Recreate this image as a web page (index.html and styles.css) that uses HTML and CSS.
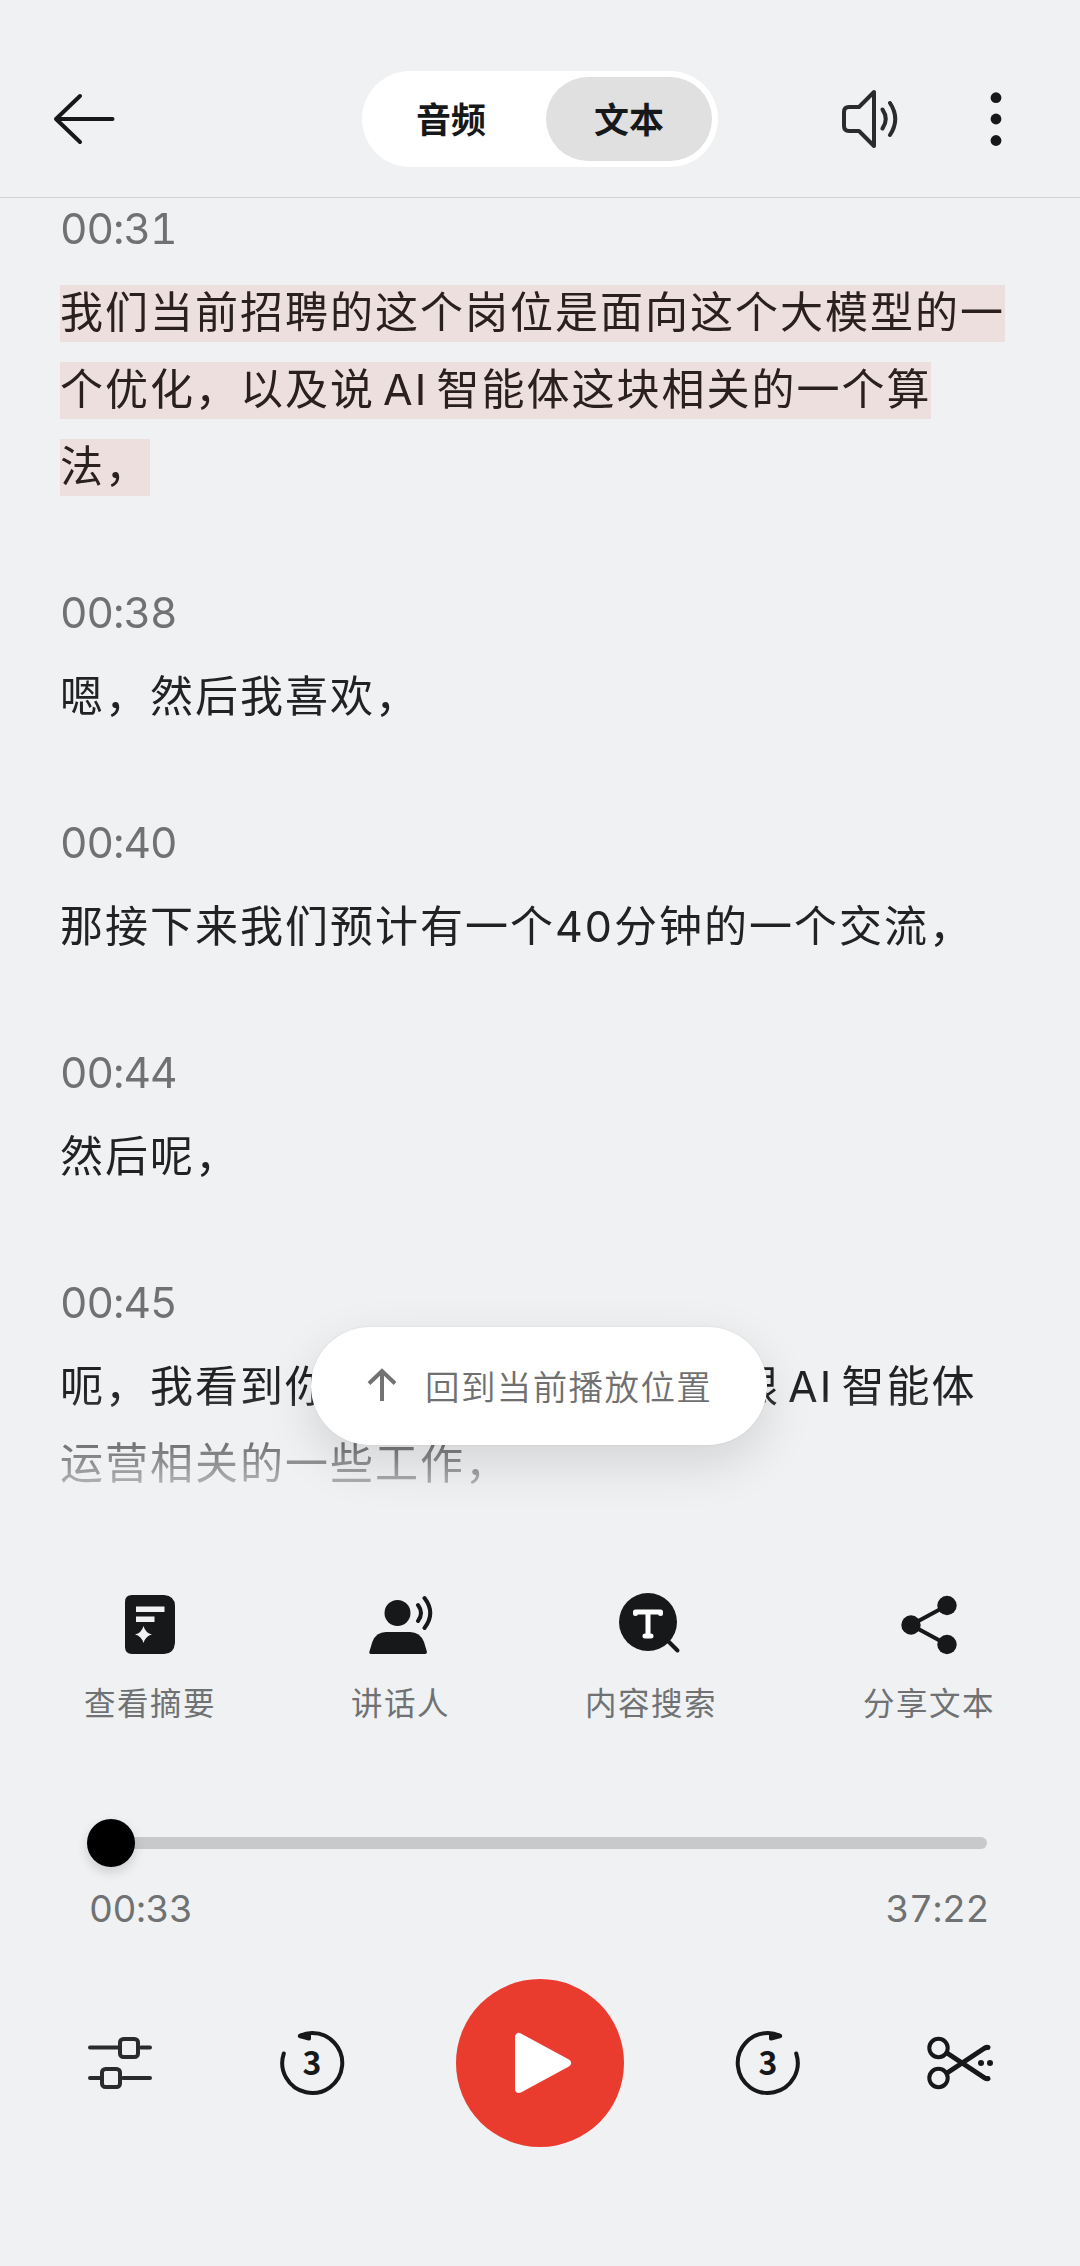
FILE: index.html
```html
<!DOCTYPE html>
<html lang="zh-CN">
<head>
  <meta charset="UTF-8">
  <meta name="viewport" content="width=device-width, initial-scale=1.0">
  <title>录音文本</title>
  <link rel="stylesheet" href="styles.css">
</head>
<body>
  <header class="topbar">
    <svg class="icon-back" width="62" height="52" viewBox="0 0 62 52">
      <path d="M59.5 26H3M27 3L3 26L27 49" />
    </svg>
    <div class="tabs">
      <div class="tab">音频</div>
      <div class="tab active">文本</div>
    </div>
    <div class="topbar-right">
      <svg class="icon-line" width="58" height="60" viewBox="0 0 58 60">
        <path d="M33 3V57L18 42H8Q3 42 3 37V23Q3 18 8 18H18Z" />
        <path d="M41.500 20.500Q48 30 41.500 39.500M49 14Q59.500 30 49 46" />
      </svg>
      <svg class="icon-more" width="12" height="54" viewBox="0 0 12 54">
        <circle cx="6" cy="5.700" r="5.400" />
        <circle cx="6" cy="27" r="5.400" />
        <circle cx="6" cy="48.500" r="5.400" />
      </svg>
    </div>
  </header>

  <main class="transcript">
    <div class="segment">
      <div class="time">00:31</div>
      <p><span class="highlight">我们当前招聘的这个岗位是面向这个大模型的一<br>个优化，以及说 AI 智能体这块相关的一个算<br>法，</span></p>
    </div>
    <div class="segment">
      <div class="time">00:38</div>
      <p>嗯，然后我喜欢，</p>
    </div>
    <div class="segment">
      <div class="time">00:40</div>
      <p>那接下来我们预计有一个40分钟的一个交流，</p>
    </div>
    <div class="segment">
      <div class="time">00:44</div>
      <p>然后呢，</p>
    </div>
    <div class="segment">
      <div class="time">00:45</div>
      <p>呃，我看到你之前也是有做过一些跟 AI 智能体<br>运营相关的一些工作，</p>
    </div>
  </main>

  <div class="back-to-current">
    <svg width="30" height="34" viewBox="0 0 30 34">
      <path d="M15 33V3M2 15.500L15 3L28 15.500" />
    </svg>
    <span>回到当前播放位置</span>
  </div>

  <div class="actions">
    <div class="action">
      <svg width="66" height="66" viewBox="0 0 66 66">
        <path d="M15 3H47Q58 4 58 14V51Q57 62 47 62H15Q8 62 8 55V10Q8 3 15 3Z" />
        <path class="cut" d="M19 14.500H47.500V20H19ZM19 24.500H37.500V30H19ZM26.500 34Q28.500 41 35 42.500Q28.500 44 26.500 51Q24.500 44 18 42.500Q24.500 41 26.500 34Z" />
      </svg>
      <span>查看摘要</span>
    </div>
    <div class="action">
      <svg width="66" height="66" viewBox="0 0 66 66">
        <circle cx="29.500" cy="21" r="13" />
        <path d="M18 40H42Q52 40 56 50L59 60Q59 62 57 62H3.500Q1 62 1.300 60L4.300 50Q8 40 18 40Z" />
        <path class="wave" d="M50 13Q56 21 50 29M56.500 6Q68 21 56.500 36" />
      </svg>
      <span>讲话人</span>
    </div>
    <div class="action">
      <svg width="66" height="66" viewBox="0 0 66 66">
        <circle cx="30" cy="30" r="29" />
        <path class="wave" d="M50 49L59.500 58.500" />
        <path class="serif" d="M17.500 21.500V20H42.500V21.500M30 20V44M27 44H33" />
      </svg>
      <span>内容搜索</span>
    </div>
    <div class="action">
      <svg width="66" height="66" viewBox="0 0 66 66">
        <circle cx="15" cy="33" r="9.700" />
        <circle cx="51" cy="13.500" r="9.700" />
        <circle cx="51" cy="52.500" r="9.700" />
        <path class="wave" d="M51 13.500L15 33L51 52.500" />
      </svg>
      <span>分享文本</span>
    </div>
  </div>

  <div class="progress">
    <div class="track">
      <div class="thumb"></div>
    </div>
    <div class="progress-times">
      <span>00:33</span>
      <span>37:22</span>
    </div>
  </div>

  <footer class="controls">
    <svg class="icon-line" width="66" height="66" viewBox="0 0 66 66">
      <path d="M3 17.500H31M54 17.500H63M3 48H13M36 48H63" />
      <rect x="33" y="9" width="18" height="18" rx="3.500" />
      <rect x="15" y="39" width="18" height="18" rx="3.500" />
    </svg>
    <svg class="icon-skip" width="66" height="66" viewBox="0 0 66 66">
      <path d="M4.800 23.500A30 30 0 1 0 33 3Q27 3 21.500 5.500" />
      <path class="tip" d="M32 2.500L20 4Q17.500 6 20 8L29.500 10.500Q32 11 32 8.500Z" />
      <text x="33" y="44.500">3</text>
    </svg>
    <div class="play">
      <svg width="58" height="62" viewBox="0 0 58 62">
        <path d="M5 5V57L53 31Z" />
      </svg>
    </div>
    <svg class="icon-skip" width="66" height="66" viewBox="0 0 66 66">
      <path d="M61.200 23.500A30 30 0 1 1 33 3Q39 3 44.500 5.500" />
      <path class="tip" d="M34 2.500L46 4Q48.500 6 46 8L36.500 10.500Q34 11 34 8.500Z" />
      <text x="33" y="44.500">3</text>
    </svg>
    <svg class="icon-cut" width="68" height="66" viewBox="0 0 68 66">
      <circle cx="11.500" cy="18" r="9.200" />
      <circle cx="11.500" cy="48" r="9.200" />
      <path class="blades" d="M20 23L57 47.500Q59 49 61 48.500M20 43L57 18.500Q59 17 61 17.500" />
      <circle class="dot" cx="54" cy="33" r="3" />
      <circle class="dot" cx="63" cy="33" r="3" />
    </svg>
  </footer>
</body>
</html>
```

FILE: styles.css
```css
* {
  box-sizing: border-box;
}

body {
  margin: 0;
  width: 1080px;
  height: 2266px;
  overflow: hidden;
  display: flex;
  flex-direction: column;
  position: relative;
  background: #eff1f3;
  color: #212224;
  font-family: Inter, "Noto Sans CJK SC", sans-serif;
}

svg {
  display: block;
  flex: none;
}

.topbar {
  height: 198px;
  flex: none;
  display: flex;
  align-items: center;
  padding: 40px 78px 0 53px;
  border-bottom: 1px solid #cfd1d3;
}

.icon-back {
  fill: none;
  stroke: #17181a;
  stroke-width: 4;
  stroke-linecap: round;
  stroke-linejoin: round;
}

.tabs {
  display: flex;
  gap: 12px;
  margin-left: 247px;
  padding: 6px;
  border-radius: 48px;
  background: #fff;
}

.tab {
  width: 166px;
  height: 84px;
  line-height: 87px;
  border-radius: 42px;
  text-align: center;
  font-size: 35px;
  font-weight: 700;
  color: #17181a;
}

.tab.active {
  background: #e0e0e0;
}

.topbar-right {
  display: flex;
  align-items: center;
  gap: 91px;
  margin-left: auto;
}

.icon-line {
  fill: none;
  stroke: #2a2b2d;
  stroke-width: 4;
  stroke-linecap: round;
  stroke-linejoin: round;
}

.icon-more {
  fill: #17181a;
}

/* scrolled list, fades out above the player */
.transcript {
  height: 1326px;
  flex: none;
  overflow: hidden;
  padding: 4px 60px 0;
  -webkit-mask-image: linear-gradient(#000 1195px, transparent 1326px);
  mask-image: linear-gradient(#000 1195px, transparent 1326px);
}

.segment {
  margin-bottom: 81px;
}

.segment p {
  margin: 20px 0 0;
  font-size: 43px;
  line-height: 77px;
  letter-spacing: 2px;
  word-spacing: -6px;
  white-space: nowrap;
}

.time {
  height: 52px;
  line-height: 54px;
  font-size: 42.500px;
  letter-spacing: -1px;
  font-variant-numeric: tabular-nums;
  color: #707173;
}

.highlight {
  padding: 1px 0 4px;
  background: #eedfdf;
  color: #2a201e;
}

.back-to-current {
  position: absolute;
  left: 311px;
  top: 1327px;
  width: 456px;
  height: 118px;
  display: flex;
  align-items: center;
  gap: 28px;
  padding: 0 0 2px 56px;
  border-radius: 59px;
  background: #fff;
  box-shadow: 0 18px 50px rgba(0, 0, 0, 0.12), 0 0 2px rgba(0, 0, 0, 0.1);
  font-size: 34.500px;
  letter-spacing: 1.400px;
  font-weight: 350;
  color: #707070;
  white-space: nowrap;
}

.back-to-current svg {
  fill: none;
  stroke: #737373;
  stroke-width: 4;
}

.actions {
  display: flex;
  gap: 135px;
  margin-top: 68px;
  padding-left: 84px;
}

.action {
  display: flex;
  flex-direction: column;
  align-items: center;
  gap: 22px;
  font-size: 31.500px;
  line-height: 48px;
  letter-spacing: 1.500px;
  color: #707173;
}

.action:last-child {
  margin-left: 11px;
}

.action svg {
  fill: #17181a;
}

.action .cut {
  fill: #eff1f3;
}

.action .wave {
  fill: none;
  stroke: #17181a;
  stroke-width: 4;
  stroke-linecap: round;
}

.action .serif {
  fill: none;
  stroke: #fff;
  stroke-width: 5;
  stroke-linecap: round;
  stroke-linejoin: round;
}

.progress {
  margin-top: 109px;
  padding: 0 93px;
}

.track {
  display: flex;
  align-items: center;
  height: 12px;
  border-radius: 6px;
  background: #c8c9cb;
}

.thumb {
  width: 48px;
  height: 48px;
  flex: none;
  margin-left: -6px;
  border-radius: 50%;
  background: #000;
  box-shadow: 0 5px 12px rgba(0, 0, 0, 0.15);
}

.progress-times {
  display: flex;
  justify-content: space-between;
  margin: 36px -2px 0 -4px;
  font-size: 37px;
  line-height: 48px;
  letter-spacing: -0.500px;
  font-variant-numeric: tabular-nums;
  color: #707173;
}

.controls {
  display: flex;
  align-items: center;
  gap: 111px;
  margin-top: 46px;
  padding-left: 87px;
}

.controls > :first-child {
  margin-right: 15px;
}

.controls > :last-child {
  margin-left: 15px;
}

.icon-skip,
.icon-cut {
  fill: none;
  stroke: #17181a;
  stroke-width: 4;
  stroke-linecap: round;
}

.icon-skip .tip {
  fill: #17181a;
  stroke: none;
}

.icon-skip text {
  fill: #17181a;
  stroke: none;
  font-family: "Noto Sans CJK SC", sans-serif;
  font-size: 32px;
  font-weight: 700;
  text-anchor: middle;
}

.icon-cut .blades {
  stroke-width: 5;
}

.icon-cut .dot {
  fill: #17181a;
  stroke: none;
}

.play {
  width: 168px;
  height: 168px;
  display: flex;
  align-items: center;
  justify-content: center;
  padding-left: 6px;
  border-radius: 50%;
  background: #ea3b2f;
}

.play path {
  fill: #fff;
  stroke: #fff;
  stroke-width: 8;
  stroke-linejoin: round;
}
```
